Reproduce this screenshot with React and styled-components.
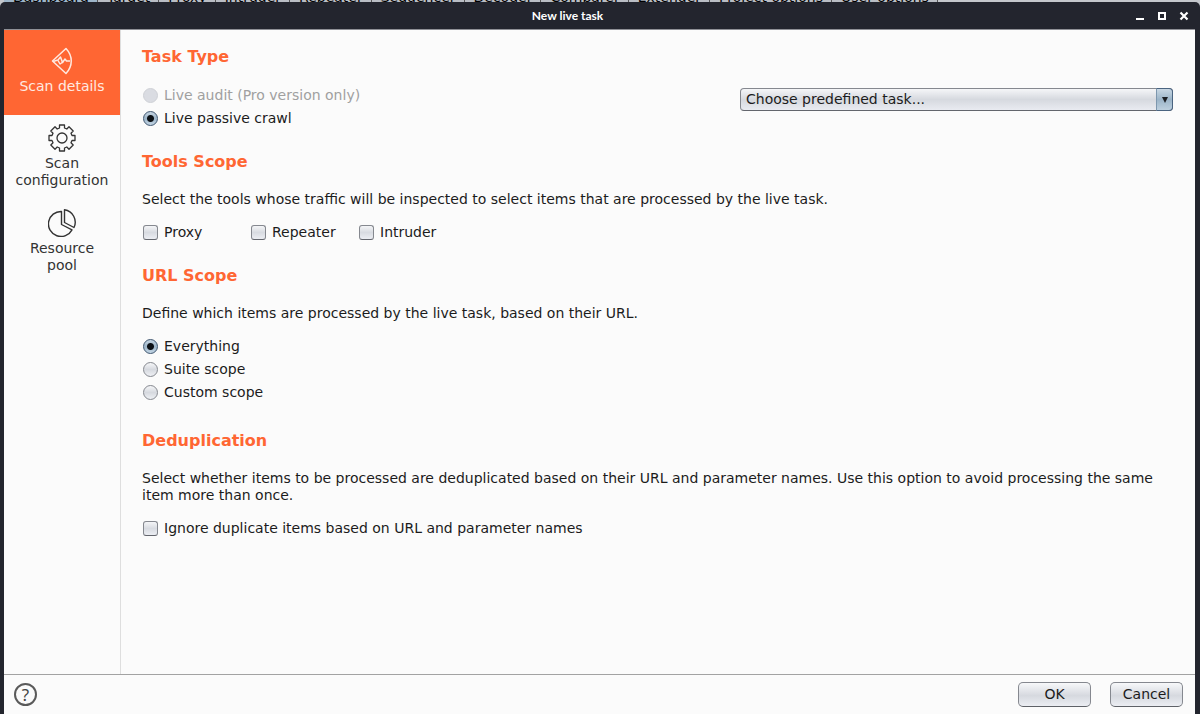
import React, { useState } from "react";
import styled, { createGlobalStyle, css } from "styled-components";

const tabs = [
  "Dashboard",
  "Target",
  "Proxy",
  "Intruder",
  "Repeater",
  "Sequencer",
  "Decoder",
  "Comparer",
  "Extender",
  "Project options",
  "User options",
];

const tools = ["Proxy", "Repeater", "Intruder"];
const scopes = ["Everything", "Suite scope", "Custom scope"];

const ScanIcon = () => (
  <svg width="28" height="28" viewBox="0 0 28 28" fill="none" stroke="currentColor" strokeWidth="1.5" strokeLinejoin="round">
    <path d="M4.5 14 18 1.5C25 9 25 19 18 26.500Z" />
    <path d="M5 14.500 10 13l2.500-3 2 5.500 2.500-3.500 1.500 2H22" />
    <path d="M10 13.500 12 17l3-2" />
  </svg>
);

const GearIcon = () => (
  <svg width="28" height="28" viewBox="0 0 28 28" fill="none" stroke="currentColor" strokeWidth="1.3" strokeLinejoin="round">
    <path d="M11.5 1h5v3l2.300 1L21 2.800 25.200 7 23 9.200l1 2.300h3v5h-3l-1 2.300 2.200 2.200-4.200 4.200-2.200-2.200-2.300 1v3h-5v-3l-2.300-1L7 25.200 2.800 21 5 18.800l-1-2.300H1v-5h3l1-2.300L2.800 7 7 2.800 9.200 5l2.300-1z" />
    <circle cx="14" cy="14" r="5" />
  </svg>
);

const PieIcon = () => (
  <svg width="28" height="28" viewBox="0 0 28 28" fill="none" stroke="currentColor" strokeWidth="1.4" strokeLinejoin="round">
    <path d="M13.5 2.500A12.500 12.500 0 1 0 24 20.800L13.5 15.500Z" />
    <path d="M16.500 .8A12.500 12.500 0 0 1 26 18.500L16.500 13.500Z" />
  </svg>
);

const pages = [
  { label: "Scan details", Icon: ScanIcon },
  { label: "Scan configuration", Icon: GearIcon },
  { label: "Resource pool", Icon: PieIcon },
];

const App = () => {
  const [page, setPage] = useState("Scan details");
  const [scope, setScope] = useState("Everything");

  return (
    <Screen>
      <GlobalStyle />
      <BackTabs>
        {tabs.map((tab) => (
          <BackTab key={tab} $active={tab === "Dashboard"}>
            {tab}
          </BackTab>
        ))}
      </BackTabs>
      <Dialog>
        <TitleBar>
          <Title>New live task</Title>
          <WindowButtons>
            <WindowButton aria-label="Minimize">
              <svg width="10" height="10" viewBox="0 0 10 10">
                <path d="M1 7h8v2H1z" fill="#fff" />
              </svg>
            </WindowButton>
            <WindowButton aria-label="Maximize">
              <svg width="10" height="10" viewBox="0 0 10 10">
                <path d="M2 2h6v6H2z" fill="none" stroke="#fff" strokeWidth="2" />
              </svg>
            </WindowButton>
            <WindowButton aria-label="Close">
              <svg width="10" height="10" viewBox="0 0 10 10">
                <path d="M1.5 1.5l7 7M8.5 1.5l-7 7" stroke="#fff" strokeWidth="2.200" />
              </svg>
            </WindowButton>
          </WindowButtons>
        </TitleBar>
        <Body>
          <Sidebar>
            {pages.map(({ label, Icon }) => (
              <PageButton
                key={label}
                $active={label === page}
                onClick={() => setPage(label)}
              >
                <Icon />
                <span>{label}</span>
              </PageButton>
            ))}
          </Sidebar>
          <Content>
            <Section>
              <Heading $tight>Task Type</Heading>
              <TaskRow>
                <Options>
                  <Option $disabled>
                    <Radio name="task" disabled />
                    Live audit (Pro version only)
                  </Option>
                  <Option>
                    <Radio name="task" defaultChecked />
                    Live passive crawl
                  </Option>
                </Options>
                <SelectWrap>
                  <Select aria-label="Predefined task">
                    <option>Choose predefined task...</option>
                  </Select>
                  <Arrow>
                    <svg width="8" height="6" viewBox="0 0 8 6">
                      <path d="M1 0h6L4 6z" fill="#1b1f24" />
                    </svg>
                  </Arrow>
                </SelectWrap>
              </TaskRow>
            </Section>
            <Section>
              <Heading>Tools Scope</Heading>
              <Text>
                Select the tools whose traffic will be inspected to select items
                that are processed by the live task.
              </Text>
              <ToolGrid>
                {tools.map((tool) => (
                  <Option key={tool}>
                    <Checkbox />
                    {tool}
                  </Option>
                ))}
              </ToolGrid>
            </Section>
            <Section $wide>
              <Heading>URL Scope</Heading>
              <Text>
                Define which items are processed by the live task, based on
                their URL.
              </Text>
              <Options>
                {scopes.map((item) => (
                  <Option key={item}>
                    <Radio
                      name="scope"
                      checked={scope === item}
                      onChange={() => setScope(item)}
                    />
                    {item}
                  </Option>
                ))}
              </Options>
            </Section>
            <Section>
              <Heading>Deduplication</Heading>
              <Text>
                Select whether items to be processed are deduplicated based on
                their URL and parameter names. Use this option to avoid
                processing the same item more than once.
              </Text>
              <Option>
                <Checkbox />
                Ignore duplicate items based on URL and parameter names
              </Option>
            </Section>
          </Content>
        </Body>
        <Footer>
          <HelpButton aria-label="Help">?</HelpButton>
          <Actions>
            <Button>OK</Button>
            <Button>Cancel</Button>
          </Actions>
        </Footer>
      </Dialog>
    </Screen>
  );
};

const GlobalStyle = createGlobalStyle`
  * {
    box-sizing: border-box;
  }
  body {
    margin: 0;
    background: #c4c7cc;
    color: #1c1c1c;
    font-family: "DejaVu Sans", sans-serif;
    font-size: 14px;
    line-height: 17px;
  }
  button, select {
    font: inherit;
    color: inherit;
  }
`;

const Screen = styled.div`
  display: flex;
  flex-direction: column;
  height: 100vh;
`;
/* main window's tab strip, mostly hidden behind the dialog */
const BackTabs = styled.div`
  display: flex;
  align-items: flex-end;
  height: 2px;
  padding-left: 4px;
  overflow: hidden;
  color: #000;
`;
const BackTab = styled.span`
  padding: 0 8px 0 9px;
  border-right: 1px solid #555;
  background: ${(props) => (props.$active ? "#9db5c9" : "#b9bdc4")};
  line-height: 10px;
  white-space: nowrap;
`;
const Dialog = styled.div`
  flex: 1;
  min-height: 0;
  display: flex;
  flex-direction: column;
  padding: 0 5px 0 4px;
  background: #23252e;
  border-radius: 5px 5px 0 0;
`;
const TitleBar = styled.header`
  display: grid;
  grid-template-columns: 1fr auto 1fr;
  align-items: center;
  height: 27px;
  padding: 0 6px 0 2px;
`;
const Title = styled.h1`
  grid-column: 2;
  margin: 0;
  padding-right: 60px;
  color: #fff;
  font-family: Lato, sans-serif;
  font-size: 12px;
  font-weight: 700;
`;
const WindowButtons = styled.div`
  display: flex;
  justify-content: flex-end;
  gap: 12px;
`;
const WindowButton = styled.button`
  display: flex;
  padding: 0;
  border: 0;
  background: none;
`;
const Body = styled.div`
  flex: 1;
  min-height: 0;
  display: flex;
  background: #fbfbfb;
  border-top: 1px solid #8f9096;
`;
const Sidebar = styled.nav`
  width: 117px;
  flex-shrink: 0;
  border-right: 1px solid #dedede;
`;
const PageButton = styled.button`
  display: flex;
  flex-direction: column;
  align-items: center;
  gap: 3px;
  width: 116px;
  min-height: 85px;
  padding: 9px 9px 0;
  border: 0;
  background: none;
  color: #333;
  cursor: pointer;
  ${(props) =>
    props.$active &&
    css`
      padding-top: 17px;
      background: #ff6633;
      color: #ffe9e0;
    `}
`;
const Content = styled.main`
  flex: 1;
  padding: 16px 22px 0 21px;
`;
const Section = styled.section`
  margin-bottom: ${(props) => (props.$wide ? "26px" : "21px")};
`;
const Heading = styled.h2`
  margin: 0 0 ${(props) => (props.$tight ? "16px" : "18px")};
  color: #ff6633;
  font-size: 16px;
  font-weight: 700;
  line-height: 22px;
`;
const Text = styled.p`
  margin: 0 0 13px;
`;
const TaskRow = styled.div`
  display: flex;
  align-items: flex-start;
  justify-content: space-between;
`;
const Options = styled.div`
  display: flex;
  flex-direction: column;
`;
const Option = styled.label`
  display: flex;
  align-items: center;
  gap: 6px;
  height: 23px;
  color: ${(props) => (props.$disabled ? "#a0a0a0" : "inherit")};
`;
const ToolGrid = styled.div`
  display: grid;
  grid-template-columns: repeat(3, 108px);
`;
const Radio = styled.input.attrs({ type: "radio" })`
  appearance: none;
  width: 15px;
  height: 15px;
  margin: 0 0 0 1px;
  border: 1px solid #85888f;
  border-radius: 50%;
  background: linear-gradient(#f6f7f9, #d6d9df 50%, #eef0f4);
  &:checked {
    border-color: #3f5670;
    background: radial-gradient(circle, #0d1116 3px, transparent 4px),
      linear-gradient(#c6d5e2, #9db5c9 50%, #c3d5e4);
  }
  &:disabled {
    border-color: #cfd1d6;
    background: #dadce2;
  }
`;
const Checkbox = styled.input.attrs({ type: "checkbox" })`
  appearance: none;
  width: 15px;
  height: 15px;
  margin: 0 0 0 1px;
  border: 1px solid #85888f;
  border-bottom-color: #63666d;
  border-radius: 3px;
  background: linear-gradient(#f4f5f7, #d8dbe1 50%, #eceef3);
  &:checked {
    background: #9db5c9;
  }
`;
const SelectWrap = styled.div`
  position: relative;
  width: 42%;
  margin-top: 4px;
`;
const Select = styled.select`
  display: block;
  appearance: none;
  width: 100%;
  height: 23px;
  padding: 0 24px 0 5px;
  border: 1px solid #85888f;
  border-bottom-color: #63666d;
  border-radius: 4px;
  background: linear-gradient(#f5f6f8, #d6d9df 50%, #e9ebf1);
`;
const Arrow = styled.span`
  position: absolute;
  top: 0;
  right: 0;
  bottom: 0;
  display: flex;
  align-items: center;
  justify-content: center;
  width: 17px;
  border: 1px solid #4a6480;
  border-left-color: #7d97ae;
  border-radius: 0 4px 4px 0;
  background: linear-gradient(#c9d8e4, #9bb4c8 50%, #bdd0df);
  pointer-events: none;
`;
const Footer = styled.footer`
  display: flex;
  align-items: center;
  justify-content: space-between;
  height: 40px;
  padding: 0 12px 0 10px;
  background: #fbfbfb;
  border-top: 1px solid #a2a2a2;
`;
const HelpButton = styled.button`
  display: flex;
  align-items: center;
  justify-content: center;
  width: 23px;
  height: 23px;
  padding: 0;
  border: 2px solid #5a5a5a;
  border-radius: 50%;
  background: none;
  color: #444;
  font-family: "Noto Sans", sans-serif;
  font-size: 17px;
`;
const Actions = styled.div`
  display: flex;
  gap: 19px;
`;
const Button = styled.button`
  width: 73px;
  height: 25px;
  padding: 0;
  border: 1px solid #85888f;
  border-bottom-color: #5f6268;
  border-radius: 5px;
  background: linear-gradient(#f7f8fa, #d6d9df 55%, #eceef3);
`;

export default App;
